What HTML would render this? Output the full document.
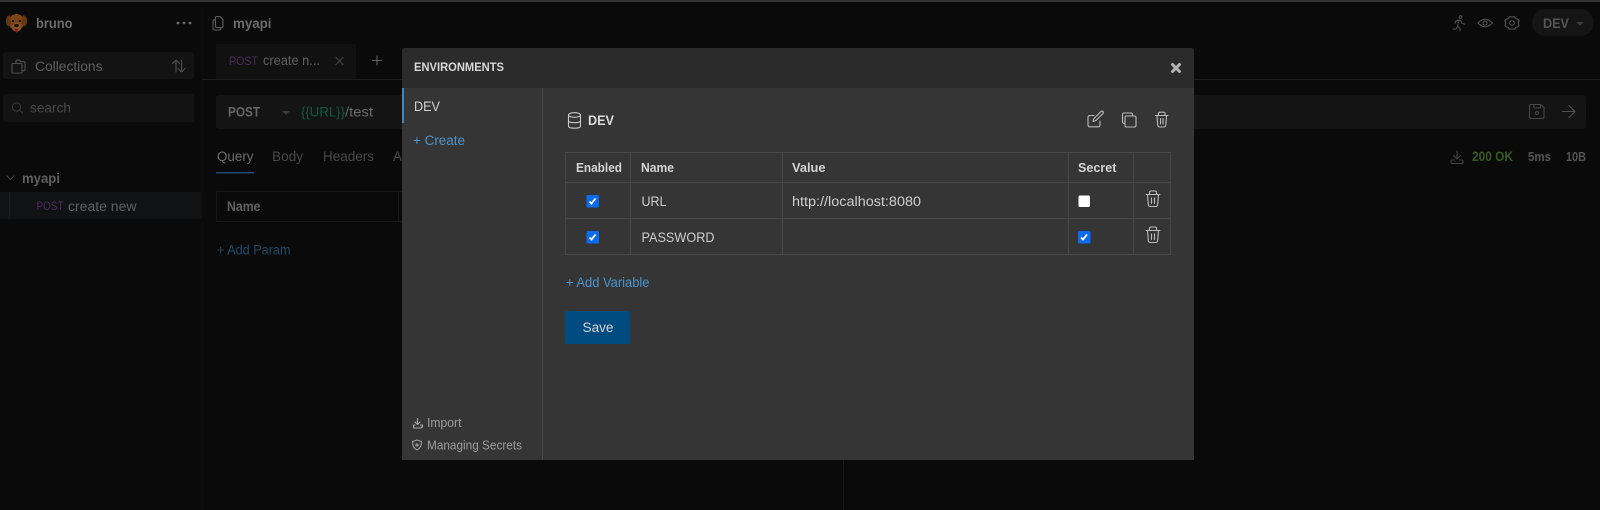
<!DOCTYPE html>
<html><head><meta charset="utf-8"><style>
html,body{margin:0;padding:0;background:#0a0a0a;width:1600px;height:510px;overflow:hidden}
svg{display:block;filter:blur(0.35px)}
text{font-family:"Liberation Sans",sans-serif;font-size:13.5px;fill:#cfcfcf}
.b{font-weight:700}
.d{fill:#5f5f5f}
.i{fill:none;stroke-width:1.1;stroke-linecap:round;stroke-linejoin:round}
.g{stroke:#4e4e4e}
</style></head><body>
<svg width="1600" height="510" viewBox="0 0 1600 510" xmlns="http://www.w3.org/2000/svg">
<rect width="1600" height="510" fill="#0a0a0a"/>
<rect width="1600" height="2" fill="#333"/>

<!-- sidebar -->
<rect x="202" y="2" width="1" height="508" fill="#0c0c0c"/>
<ellipse cx="16.500" cy="22" rx="8" ry="8" fill="#7c4517"/>
<path d="M10 15q-4 1-4 6 0 4 2.500 5.500L11 24zM23 15q4 1 4 6 0 4-2.500 5.500L22 24z" fill="#63370f"/>
<ellipse cx="16.500" cy="27" rx="5" ry="4.500" fill="#8a5220"/>
<circle cx="13" cy="21" r="1.100" fill="#111"/><circle cx="20" cy="21" r="1.100" fill="#111"/>
<ellipse cx="16.500" cy="25.500" rx="2.400" ry="1.500" fill="#1a1008"/>
<path d="M15 28.500h3v3q-1.500 2-3 0z" fill="#8c1f24"/>
<text x="36" y="28" class="b" style="fill:#6b6b6b" textLength="36.500" lengthAdjust="spacingAndGlyphs">bruno</text>
<circle cx="178" cy="23" r="1.400" fill="#6c6c6c"/><circle cx="184" cy="23" r="1.400" fill="#6c6c6c"/><circle cx="190" cy="23" r="1.400" fill="#6c6c6c"/>

<rect x="3" y="52" width="191" height="27" rx="3" fill="#131313"/>
<path class="i g" d="M16 63.500v-2q0-1.300 1.300-1.300h2.200l1.500 1.500h2.700q1.300 0 1.300 1.300v6.500q0 1.300-1.300 1.300H22M13.300 63.500h7.400q1.300 0 1.300 1.300v6.900q0 1.300-1.300 1.300h-7.400q-1.300 0-1.300-1.300v-6.900q0-1.300 1.300-1.300z"/>
<text x="35" y="71" class="d" textLength="67.500" lengthAdjust="spacingAndGlyphs">Collections</text>
<path class="i g" d="M176 72V60M172.500 63.500l3.500-3.500 3.500 3.500M181.500 60v12M178 68.500l3.500 3.500 3.500-3.500"/>

<rect x="3" y="94" width="191" height="28" rx="3" fill="#131313"/>
<circle cx="16.500" cy="107" r="4.200" class="i" stroke="#353535"/><path class="i" stroke="#353535" d="M19.700 110.200l3 3"/>
<text x="30" y="112.500" style="fill:#484848" textLength="41" lengthAdjust="spacingAndGlyphs">search</text>

<path class="i" stroke="#444" d="M7 176l3.500 3.500 3.500-3.500"/>
<text x="22" y="183" class="b d" textLength="38" lengthAdjust="spacingAndGlyphs">myapi</text>
<rect x="0" y="192" width="202" height="27" fill="#111214"/>
<rect x="9" y="192" width="1" height="27" fill="#1a1b1d"/>
<text x="36.500" y="210" style="fill:#4c2a5c;font-size:11.500px" textLength="27" lengthAdjust="spacingAndGlyphs">POST</text>
<text x="68" y="211" class="d" textLength="68.500" lengthAdjust="spacingAndGlyphs">create new</text>

<!-- top bar -->
<path class="i" stroke="#5e5e5e" d="M217 16.500h3l3 3v6.500q0 1.500-1.500 1.500H217q-1.500 0-1.500-1.500v-8q0-1.500 1.500-1.500zM215.500 19.500q-2.500 0-2.500 2v7q0 1.500 1.500 1.500h4.500q1.500 0 2-1.500"/>
<text x="233" y="28" class="b" style="fill:#6b6b6b" textLength="38.500" lengthAdjust="spacingAndGlyphs">myapi</text>
<circle cx="1460.500" cy="17" r="1.300" class="i g"/>
<path class="i g" d="M1453 29h3l1.500-2.500 2.500 1.800V31M1457.500 26.500l1.500-6.500 2 1 1 2.500 2.500.6M1459 20l-3 .8-1 2.700"/>
<path class="i" stroke="#525252" d="M1478 23q7-7.500 14.500 0-7.500 7.500-14.500 0z"/><circle cx="1485" cy="23" r="2" class="i" stroke="#525252"/>
<path class="i" stroke="#525252" d="M1509.500 16.800h5l1.200 1.900 2.200.3 1.200 1.900-1.100 2.100 1.100 2.100-1.200 1.900-2.200.3-1.200 1.900h-5l-1.200-1.900-2.200-.3-1.200-1.900 1.100-2.100-1.100-2.100 1.200-1.900 2.200-.3z"/><circle cx="1512" cy="23" r="2.300" class="i" stroke="#525252"/>
<rect x="1532" y="9" width="62" height="27" rx="13.500" fill="#151515"/>
<text x="1543" y="28" class="b" style="fill:#555" textLength="26" lengthAdjust="spacingAndGlyphs">DEV</text>
<path d="M1576.500 22h7l-3.500 3.500z" fill="#3f3f3f"/>

<!-- tabs -->
<rect x="216" y="44" width="140" height="35" fill="#111"/>
<rect x="202" y="79" width="1398" height="1" fill="#1c1c1c"/>
<text x="229" y="65" style="fill:#4c2a5c;font-size:12px" textLength="29" lengthAdjust="spacingAndGlyphs">POST</text>
<text x="263" y="65" class="d" textLength="57" lengthAdjust="spacingAndGlyphs">create n...</text>
<path class="i" stroke="#444" d="M336 57.500l7 7M343 57.500l-7 7"/>
<path class="i" stroke="#626262" d="M377 56v9M372.500 60.500h9"/>

<!-- url bar -->
<rect x="216" y="95" width="1370" height="34" rx="3" fill="#141414"/>
<text x="228" y="116.500" class="b" style="fill:#666" textLength="32" lengthAdjust="spacingAndGlyphs">POST</text>
<path d="M282 111h8l-4 3.800z" fill="#3c3c3c"/>
<text x="301" y="116.500" style="fill:#0e5a3e" textLength="44" lengthAdjust="spacingAndGlyphs">{{URL}}</text>
<text x="345" y="116.500" style="fill:#6a6a6a" textLength="28" lengthAdjust="spacingAndGlyphs">/test</text>
<path class="i" stroke="#474747" d="M1531 104.500h10l3 3v9.500q0 1.500-1.500 1.500h-11.500q-1.500 0-1.500-1.500v-11q0-1.500 1.500-1.500zM1534 104.500v3.500h6.500v-3.500"/><circle cx="1537" cy="113" r="1.500" class="i" stroke="#474747"/>
<path class="i" stroke="#505050" d="M1562.500 111.500h12M1569 105.500l6 6-6 6"/>

<!-- pane tabs -->
<text x="217" y="161" style="fill:#6c6c6c" textLength="36.500" lengthAdjust="spacingAndGlyphs">Query</text>
<text x="272" y="161" style="fill:#484848" textLength="31" lengthAdjust="spacingAndGlyphs">Body</text>
<text x="323" y="161" style="fill:#484848" textLength="51" lengthAdjust="spacingAndGlyphs">Headers</text>
<text x="393" y="161" style="fill:#484848">A</text>
<rect x="216" y="172" width="38" height="1.500" fill="#1c4c6e"/>
<path d="M216.500 191.500H402M216.500 221.500H402M216.500 191.500v30M398.500 191.500v30" fill="none" stroke="#161616"/>
<text x="227" y="211" class="b" style="fill:#606060" textLength="33.500" lengthAdjust="spacingAndGlyphs">Name</text>
<text x="217" y="254.500" style="fill:#1f4a6a" textLength="73.500" lengthAdjust="spacingAndGlyphs">+ Add Param</text>

<path class="i" stroke="#444" d="M1457 151v8M1453.500 155.500l3.500 3.500 3.500-3.500M1454.500 160h-3l-.5 1v1q0 1.500 1.500 1.500h9q1.500 0 1.500-1.500v-1l-.5-1h-3"/>
<text x="1472" y="161" class="b" style="fill:#365a20" textLength="41" lengthAdjust="spacingAndGlyphs">200 OK</text>
<text x="1528" y="161" class="b" style="fill:#555;font-size:12.500px" textLength="23" lengthAdjust="spacingAndGlyphs">5ms</text>
<text x="1566" y="161" class="b" style="fill:#555;font-size:12.500px" textLength="20" lengthAdjust="spacingAndGlyphs">10B</text>
<rect x="843" y="460" width="1" height="50" fill="#181818"/>

<!-- modal -->
<path d="M402 51q0-3 3-3h786q3 0 3 3v37H402z" fill="#2b2b2b"/>
<rect x="402" y="88" width="792" height="372" fill="#353535"/>
<rect x="542" y="88" width="1" height="372" fill="#4a4a4a"/>
<rect x="402" y="88" width="2" height="35" fill="#3f86c0"/>
<text x="414" y="71" class="b" style="font-size:11.500px;fill:#d8d8d8" textLength="90" lengthAdjust="spacingAndGlyphs">ENVIRONMENTS</text>
<path d="M1172.500 64.500l7 7M1179.500 64.500l-7 7" stroke="#b4b4b4" stroke-width="3" stroke-linecap="round"/>
<text x="414" y="111" style="fill:#d2d2d2" textLength="26" lengthAdjust="spacingAndGlyphs">DEV</text>
<text x="413" y="145" style="fill:#4a94cc" textLength="52" lengthAdjust="spacingAndGlyphs">+ Create</text>

<path class="i" stroke="#a8a8a8" d="M417.500 418.500v6M415 422l2.500 2.500 2.500-2.500M415 425h-1.500v2q0 1 1 1h6q1 0 1-1h1v-2h-2"/>
<text x="427" y="427" style="fill:#9c9c9c;font-size:12.500px" textLength="34.500" lengthAdjust="spacingAndGlyphs">Import</text>
<path class="i" stroke="#a0a0a0" d="M417 440l4.500 1.500q0 6.500-4.500 8.500-4.500-2-4.500-8.500z"/><circle cx="417" cy="445" r="1.100" class="i" stroke="#a0a0a0"/>
<text x="427" y="449.500" style="fill:#9c9c9c;font-size:12.500px" textLength="95" lengthAdjust="spacingAndGlyphs">Managing Secrets</text>

<!-- main head -->
<ellipse cx="574.500" cy="115" rx="6" ry="2.300" class="i" stroke="#c8c8c8"/>
<path class="i" stroke="#c8c8c8" d="M568.500 115v11q0 2.200 6 2.200t6-2.200v-11M568.500 120.500q0 2.200 6 2.200t6-2.200"/>
<text x="588" y="125" class="b" style="fill:#dcdcdc" textLength="26" lengthAdjust="spacingAndGlyphs">DEV</text>
<path class="i" stroke="#bcbcbc" d="M1094 115.500h-4q-2 0-2 2v7.500q0 1.800 1.800 1.800h8.400q1.800 0 1.800-1.800V121M1093 121.500l1-3 7-7q1-.8 2 0q.8 1 0 2l-7 7z"/>
<path class="i" stroke="#bcbcbc" d="M1126.500 116h8q1.500 0 1.500 1.500v8q0 1.500-1.500 1.500h-8q-1.500 0-1.500-1.500v-8q0-1.500 1.500-1.500zM1132.500 116v-1.500q0-1.500-1.500-1.500h-7q-1.500 0-1.500 1.500v7.500q0 1.500 2.500 1.500"/>
<path class="i" stroke="#bcbcbc" d="M1155.500 115.500h12.500M1158.500 115.500v-2q0-1.300 1.300-1.300h3.900q1.300 0 1.300 1.300v2M1157 115.500l.7 9.500q.2 2 2 2h4.100q1.800 0 2-2l.7-9.500M1160.500 118.500v5.500M1163 118.500v5.500"/>

<!-- table -->
<g stroke="#484848" fill="none">
<rect x="565.500" y="152.500" width="605" height="102"/>
<path d="M565.500 182.500h605M565.500 218.500h605M630.500 152.500v102M782.500 152.500v102M1068.500 152.500v102M1133.500 152.500v102"/>
</g>
<text x="576" y="172" class="b" style="fill:#d4d4d4;font-size:12.500px" textLength="46" lengthAdjust="spacingAndGlyphs">Enabled</text>
<text x="641" y="172" class="b" style="fill:#d4d4d4;font-size:12.500px" textLength="33" lengthAdjust="spacingAndGlyphs">Name</text>
<text x="792" y="172" class="b" style="fill:#d4d4d4;font-size:12.500px" textLength="33.500" lengthAdjust="spacingAndGlyphs">Value</text>
<text x="1078" y="172" class="b" style="fill:#d4d4d4;font-size:12.500px" textLength="38.500" lengthAdjust="spacingAndGlyphs">Secret</text>
<text x="641.500" y="206" textLength="25" lengthAdjust="spacingAndGlyphs">URL</text>
<text x="641.500" y="242" textLength="73" lengthAdjust="spacingAndGlyphs">PASSWORD</text>
<text x="792" y="206" textLength="129" lengthAdjust="spacingAndGlyphs">http://localhost:8080</text>

<rect x="586.500" y="195" width="12.500" height="12.500" rx="1.500" fill="#0b6bf0"/><path d="M589.500 201.500l2 2 4-5" fill="none" stroke="#fff" stroke-width="1.800"/>
<rect x="586.500" y="231" width="12.500" height="12.500" rx="1.500" fill="#0b6bf0"/><path d="M589.500 237.500l2 2 4-5" fill="none" stroke="#fff" stroke-width="1.800"/>
<rect x="1078.500" y="195.500" width="11.500" height="11.500" rx="1.500" fill="#fff"/>
<rect x="1078" y="231" width="12.500" height="12.500" rx="1.500" fill="#0b6bf0"/><path d="M1081 237.500l2 2 4-5" fill="none" stroke="#fff" stroke-width="1.800"/>

<path class="i" stroke="#bcbcbc" d="M1146 194.500h14M1149.500 194.500v-2q0-1.500 1.500-1.500h4q1.500 0 1.500 1.500v2M1147.500 194.500l.8 10q.2 2 2 2h5.400q1.800 0 2-2l.8-10M1151.500 198v5.500M1154.500 198v5.500"/>
<path class="i" stroke="#bcbcbc" d="M1146 230.500h14M1149.500 230.500v-2q0-1.500 1.500-1.500h4q1.500 0 1.500 1.500v2M1147.500 230.500l.8 10q.2 2 2 2h5.400q1.800 0 2-2l.8-10M1151.500 234v5.500M1154.500 234v5.500"/>
<text x="566" y="287" style="fill:#4a94cc" textLength="83.500" lengthAdjust="spacingAndGlyphs">+ Add Variable</text>
<rect x="565" y="311" width="65" height="33" rx="2" fill="#004b80"/>
<text x="582.500" y="332" style="fill:#d6d6d6" textLength="31" lengthAdjust="spacingAndGlyphs">Save</text>
</svg>
</body></html>
